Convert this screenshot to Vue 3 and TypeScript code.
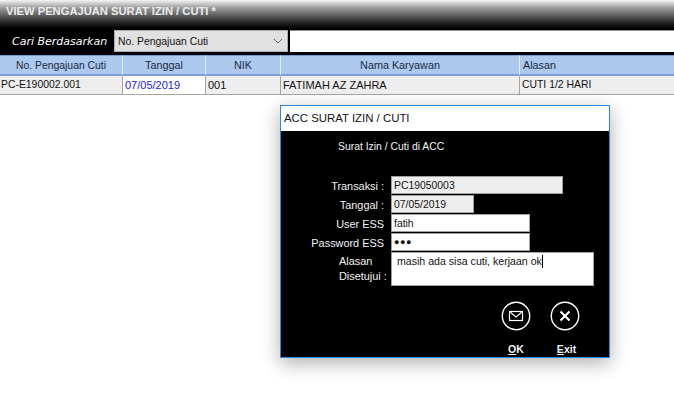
<script setup lang="ts">
const columns = [
  { label: 'No. Pengajuan Cuti', value: 'PC-E190002.001', cls: 'narrow' },
  { label: 'Tanggal', value: '07/05/2019', cls: 'date' },
  { label: 'NIK', value: '001', cls: '' },
  { label: 'Nama Karyawan', value: 'FATIMAH AZ ZAHRA', cls: '' },
  { label: 'Alasan', value: 'CUTI 1/2 HARI', cls: 'left' },
]
</script>

<template>
  <div class="page">
    <header class="titlebar">VIEW PENGAJUAN SURAT IZIN / CUTI *</header>
    <div class="search">
      <span class="search-label">Cari Berdasarkan</span>
      <div class="select">
        <span>No. Pengajuan Cuti</span>
        <svg width="10" height="6" viewBox="0 0 10 6"><path d="M1 1l4 4 4-4" fill="none" stroke="#666" stroke-width="1" /></svg>
      </div>
      <div class="search-input"></div>
    </div>
    <div class="table">
      <div v-for="c in columns" :key="c.label" class="head" :class="c.cls">{{ c.label }}</div>
      <div v-for="c in columns" :key="c.value" class="cell" :class="c.cls">{{ c.value }}</div>
    </div>

    <section class="dialog">
      <div class="dialog-title">ACC SURAT IZIN / CUTI</div>
      <div class="dialog-body">
        <p class="subtitle">Surat Izin / Cuti di ACC</p>
        <div class="form">
          <label class="lbl">Transaksi :</label>
          <div class="field ro w172">PC19050003</div>
          <label class="lbl">Tanggal :</label>
          <div class="field ro w83">07/05/2019</div>
          <label class="lbl">User ESS</label>
          <div class="field w139">fatih</div>
          <label class="lbl">Password ESS</label>
          <div class="field w139 dots">●●●</div>
          <label class="lbl multi">Alasan<br />Disetujui :</label>
          <div class="field area">masih ada sisa cuti, kerjaan ok<i class="caret"></i></div>
        </div>
        <div class="actions">
          <div class="action">
            <svg width="30" height="30" viewBox="0 0 30 30">
              <circle cx="15" cy="15" r="13.7" fill="none" stroke="#fff" stroke-width="1.4" />
              <rect x="8.500" y="10.500" width="13" height="9" fill="none" stroke="#fff" stroke-width="1.2" />
              <path d="M9 11l6 5 6-5" fill="none" stroke="#fff" stroke-width="1.1" />
            </svg>
            <span><u>O</u>K</span>
          </div>
          <div class="action">
            <svg width="30" height="30" viewBox="0 0 30 30">
              <circle cx="15" cy="15" r="13.7" fill="none" stroke="#fff" stroke-width="1.4" />
              <path d="M10.500 10.500l9 9M19.500 10.500l-9 9" fill="none" stroke="#fff" stroke-width="2.200" />
            </svg>
            <span class="exit"><u>E</u>xit</span>
          </div>
        </div>
      </div>
    </section>
  </div>
</template>

<style scoped>
.page {
  position: relative;
  width: 674px;
  height: 407px;
  overflow: hidden;
  background: #fff;
  font-family: "Liberation Sans", Arial, sans-serif;
  font-size: 10.4px;
  color: #111;
}
.titlebar {
  height: 30px;
  box-sizing: border-box;
  padding: 4px 0 0 6px;
  font-size: 11.2px;
  font-weight: 700;
  line-height: 14px;
  color: #ececec;
  background: linear-gradient(#f4f4f4 0, #9a9a9a 8px, #3a3a3a 20px, #000 28px);
}
.search {
  height: 25px;
  display: flex;
  align-items: flex-start;
  background: #000;
}
.search-label {
  width: 114px;
  box-sizing: border-box;
  padding: 5px 0 0 12px;
  color: #fff;
  font-family: "DejaVu Sans", sans-serif;
  font-style: italic;
  font-size: 11px;
  line-height: 13px;
  white-space: nowrap;
}
.select {
  width: 174px;
  height: 22px;
  box-sizing: border-box;
  display: flex;
  align-items: center;
  justify-content: space-between;
  padding: 0 4px 0 3px;
  background: #e1e1e1;
  border: 1px solid #adadad;
}
.search-input {
  flex: 1;
  height: 22px;
  margin-left: 2px;
  background: #fff;
  border-top: 1px solid #888;
  box-sizing: border-box;
}
.table {
  display: grid;
  grid-template-columns: 123px 83px 75px 239px 154px;
  grid-template-rows: 21px 19px;
}
.head {
  box-sizing: border-box;
  padding-top: 1px;
  background: #adc9ee;
  border-top: 1px solid #6f9adb;
  border-bottom: 2px solid #7a9cd8;
  border-right: 1px solid #e6eefa;
  text-align: center;
  font-size: 10.800px;
  line-height: 17px;
  color: #1c2a44;
}
.head.narrow { font-size: 10.400px; }
.head.left {
  text-align: left;
  padding-left: 3px;
  border-right: 0;
}
.cell {
  box-sizing: border-box;
  background: #eee;
  border-bottom: 1px solid #a5a5a5;
  border-right: 1px solid #a5a5a5;
  padding-left: 1px;
  font-size: 11px;
  line-height: 18px;
  white-space: nowrap;
}
.cell.narrow, .cell.left { font-size: 10.400px; }
.cell.date {
  background: #fff;
  color: #1a1ae0;
  padding-left: 2px;
}
.cell:nth-child(8), .cell:nth-child(9) { padding-left: 2px; }
.cell.left { border-right: 0; padding-left: 2px; }
.dialog {
  position: absolute;
  left: 280px;
  top: 105px;
  width: 330px;
  height: 253px;
  box-sizing: border-box;
  border: 1px solid #2b88d8;
  background: #000;
  box-shadow: 0 5px 18px rgba(0, 0, 0, 0.32);
}
.dialog-title {
  height: 25px;
  box-sizing: border-box;
  padding-left: 3px;
  background: #fff;
  color: #111;
  font-size: 11.400px;
  line-height: 24px;
}
.dialog-body {
  color: #f2f2f2;
}
.subtitle {
  margin: 0;
  padding: 9px 0 0 57px;
  height: 45px;
  box-sizing: border-box;
  line-height: 13px;
}
.form {
  display: grid;
  grid-template-columns: 103px 1fr;
  column-gap: 7px;
  row-gap: 1px;
  grid-template-rows: 18px 18px 18px 18px 35px;
}
.lbl {
  text-align: right;
  font-size: 10.900px;
  line-height: 20px;
  white-space: nowrap;
}
.lbl.multi {
  text-align: left;
  padding-left: 58px;
  line-height: 14.500px;
  padding-top: 2px;
}
.field {
  box-sizing: border-box;
  height: 18px;
  padding: 1px 0 0 2px;
  border: 1px solid #a0a0a0;
  background: #fff;
  color: #111;
  line-height: 15px;
}
.field.ro { background: #eee; }
.w172 { width: 172px; }
.w83 { width: 83px; }
.w139 { width: 139px; }
.dots { font-size: 9px; letter-spacing: 0.600px; }
.area {
  width: 203px;
  height: 34px;
  padding-left: 5px;
  padding-top: 1px;
  font-size: 10.600px;
  line-height: 15px;
}
.caret {
  display: inline-block;
  width: 1px;
  height: 13px;
  background: #000;
  vertical-align: -3px;
}
.actions {
  display: flex;
  gap: 19px;
  margin: 14px 0 0 220px;
}
.action {
  width: 30px;
  display: flex;
  flex-direction: column;
  align-items: center;
  gap: 12px;
}
.action span {
  font-weight: 700;
  font-size: 10.500px;
  line-height: 13px;
  color: #f4f4f4;
  white-space: nowrap;
}
.action span.exit { padding-left: 3px; }
</style>
